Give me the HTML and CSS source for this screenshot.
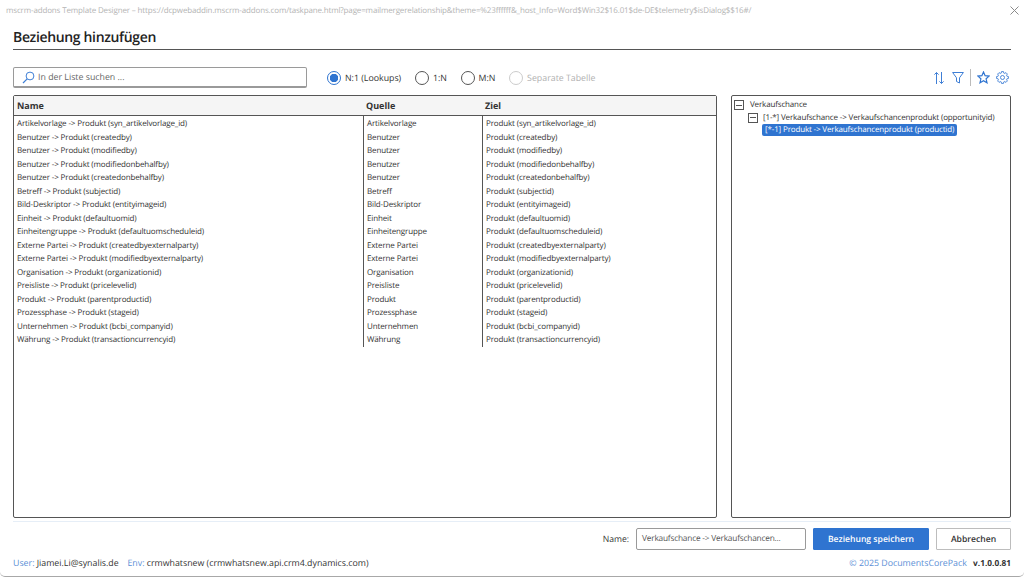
FILE: index.html
```html
<!DOCTYPE html>
<html lang="de">
<head>
<meta charset="utf-8">
<title>Beziehung hinzufügen</title>
<link rel="stylesheet" href="styles.css">
</head>
<body>
<div class="window">
  <div class="titlebar">
    <span class="titlebar-text">mscrm-addons Template Designer – https://dcpwebaddin.mscrm-addons.com/taskpane.html?page=mailmergerelationship&amp;theme=%23ffffff&amp;_host_Info=Word$Win32$16.01$de-DE$telemetry$isDialog$$16#/</span>
    <svg class="close" width="9" height="9" viewBox="0 0 9 9"><path d="M.5.5l8 8M8.500.5l-8 8" stroke="#8a8a8a" stroke-width="1" fill="none"/></svg>
  </div>
  <h1 class="heading">Beziehung hinzufügen</h1>
  <div class="toolbar">
    <div class="search">
      <svg class="search-icon" width="13" height="13" viewBox="0 0 13 13"><circle cx="8" cy="5" r="3.900" fill="none" stroke="#3f7fd6" stroke-width="1"/><path d="M5.200 7.800L1 12" stroke="#3f7fd6" stroke-width="1.200" fill="none"/></svg>
      <span>In der Liste suchen ...</span>
    </div>
    <div class="radios">
      <span class="radio"><i class="dot on"></i>N:1 (Lookups)</span>
      <span class="radio"><i class="dot"></i>1:N</span>
      <span class="radio"><i class="dot"></i>M:N</span>
      <span class="radio disabled"><i class="dot"></i>Separate Tabelle</span>
    </div>
    <div class="tools">
      <svg class="tool-sort" width="10" height="14" viewBox="0 0 10 14"><path d="M2.500 13V1.500M.4 3.600l2.100-2.100 2.100 2.100" stroke="#3f7fd6" fill="none"/><path d="M7.500 1v11.500M5.400 10.400l2.100 2.100 2.100-2.100" stroke="#3f7fd6" fill="none"/></svg>
      <svg width="12" height="13" viewBox="0 0 12 13"><path d="M.6 1.500h10.800L7.500 6.800V12L4.500 10.500V6.800z" stroke="#3f7fd6" fill="none"/></svg>
      <i class="tool-sep"></i>
      <svg width="13" height="13" viewBox="0 0 13 13"><path d="M6.500 1l1.600 3.700 4 .4-3 2.700.9 4-3.500-2.100L3 11.800l.9-4-3-2.700 4-.4z" stroke="#2f74d0" stroke-width="1.200" fill="none"/></svg>
      <svg class="tool-gear" width="13" height="13" viewBox="-6.500 -6.500 13 13"><circle r="2" stroke="#3f7fd6" stroke-width=".9" fill="none"/><path d="M-1.300-4.400L-1-5.900H1L1.300-4.400 2.190-4.030 3.460-4.880 4.880-3.460 4.030-2.190 4.400-1.300 5.900-1V1L4.400 1.300 4.030 2.190 4.880 3.460 3.460 4.880 2.190 4.030 1.300 4.400 1 5.900H-1L-1.300 4.400-2.190 4.030-3.460 4.880-4.880 3.460-4.030 2.190-4.400 1.300-5.900 1V-1L-4.400-1.300-4.030-2.190-4.880-3.460-3.460-4.880-2.190-4.030z" stroke="#3f7fd6" stroke-width=".9" stroke-linejoin="round" fill="none"/></svg>
    </div>
  </div>
  <div class="panes">
    <div class="pane list">
      <div class="cols head"><div>Name</div><div>Quelle</div><div>Ziel</div></div>
      <div class="cols body">
        <div class="col">
          <div>Artikelvorlage -&gt; Produkt (syn_artikelvorlage_id)</div>
          <div>Benutzer -&gt; Produkt (createdby)</div>
          <div>Benutzer -&gt; Produkt (modifiedby)</div>
          <div>Benutzer -&gt; Produkt (modifiedonbehalfby)</div>
          <div>Benutzer -&gt; Produkt (createdonbehalfby)</div>
          <div>Betreff -&gt; Produkt (subjectid)</div>
          <div>Bild-Deskriptor -&gt; Produkt (entityimageid)</div>
          <div>Einheit -&gt; Produkt (defaultuomid)</div>
          <div>Einheitengruppe -&gt; Produkt (defaultuomscheduleid)</div>
          <div>Externe Partei -&gt; Produkt (createdbyexternalparty)</div>
          <div>Externe Partei -&gt; Produkt (modifiedbyexternalparty)</div>
          <div>Organisation -&gt; Produkt (organizationid)</div>
          <div>Preisliste -&gt; Produkt (pricelevelid)</div>
          <div>Produkt -&gt; Produkt (parentproductid)</div>
          <div>Prozessphase -&gt; Produkt (stageid)</div>
          <div>Unternehmen -&gt; Produkt (bcbi_companyid)</div>
          <div>Währung -&gt; Produkt (transactioncurrencyid)</div>
        </div>
        <div class="col">
          <div>Artikelvorlage</div>
          <div>Benutzer</div>
          <div>Benutzer</div>
          <div>Benutzer</div>
          <div>Benutzer</div>
          <div>Betreff</div>
          <div>Bild-Deskriptor</div>
          <div>Einheit</div>
          <div>Einheitengruppe</div>
          <div>Externe Partei</div>
          <div>Externe Partei</div>
          <div>Organisation</div>
          <div>Preisliste</div>
          <div>Produkt</div>
          <div>Prozessphase</div>
          <div>Unternehmen</div>
          <div>Währung</div>
        </div>
        <div class="col">
          <div>Produkt (syn_artikelvorlage_id)</div>
          <div>Produkt (createdby)</div>
          <div>Produkt (modifiedby)</div>
          <div>Produkt (modifiedonbehalfby)</div>
          <div>Produkt (createdonbehalfby)</div>
          <div>Produkt (subjectid)</div>
          <div>Produkt (entityimageid)</div>
          <div>Produkt (defaultuomid)</div>
          <div>Produkt (defaultuomscheduleid)</div>
          <div>Produkt (createdbyexternalparty)</div>
          <div>Produkt (modifiedbyexternalparty)</div>
          <div>Produkt (organizationid)</div>
          <div>Produkt (pricelevelid)</div>
          <div>Produkt (parentproductid)</div>
          <div>Produkt (stageid)</div>
          <div>Produkt (bcbi_companyid)</div>
          <div>Produkt (transactioncurrencyid)</div>
        </div>
      </div>
    </div>
    <div class="pane tree">
      <div class="node"><i class="toggle"></i><span>Verkaufschance</span></div>
      <div class="node level1"><i class="toggle"></i><span>[1-*] Verkaufschance -&gt; Verkaufschancenprodukt (opportunityid)</span></div>
      <div class="node level2"><span class="selected">[*-1] Produkt -&gt; Verkaufschancenprodukt (productid)</span></div>
    </div>
  </div>
  <div class="actions">
    <label class="name-label">Name:</label>
    <div class="name-input">Verkaufschance -&gt; Verkaufschancen...</div>
    <button class="btn primary">Beziehung speichern</button>
    <button class="btn">Abbrechen</button>
  </div>
  <div class="status">
    <div><span class="key">User:</span> Jiamei.Li@synalis.de <span class="key env">Env:</span> crmwhatsnew (crmwhatsnew.api.crm4.dynamics.com)</div>
    <div><span class="key copy">© 2025 DocumentsCorePack</span> <b class="version">v.1.0.0.81</b></div>
  </div>
</div>
</body>
</html>
```
FILE: styles.css
```css
* { box-sizing: border-box; }
html, body { margin: 0; height: 100%; background: #fff; overflow: hidden; }
body { font-family: "Open Sans", "Noto Sans", sans-serif; color: #333; text-rendering: geometricPrecision; }
.window {
  width: 1024px; height: 577px; display: flex; flex-direction: column;
  padding: 0 13px; border-bottom: 1px solid #a8a8a8; border-radius: 0 0 5px 5px;
}
.titlebar { display: flex; justify-content: space-between; align-items: center; height: 20px; margin: 0 -8px 0 -7px; }
.titlebar-text { font-size: 8px; color: #b4b4b4; white-space: nowrap; letter-spacing: -.15px; }
.close { flex: none; }
.heading {
  margin: 6px 0 0; height: 24px; font-size: 14px; line-height: 23px; font-weight: 600; color: #222;
  border-bottom: 1px solid #555; letter-spacing: -.35px;
}
.toolbar { display: flex; align-items: center; height: 21px; margin-top: 17px; }
.search {
  width: 294px; height: 21px; display: flex; align-items: center; gap: 3px; padding-left: 8px;
  border: 1px solid #9a9a9a; border-bottom-width: 2px; border-radius: 2px; font-size: 8.800px; color: #666;
}
.radios { display: flex; align-items: center; gap: 13.700px; margin-left: 20px; }
.radio { display: flex; align-items: center; gap: 4px; font-size: 8.800px; color: #333; }
.radio.disabled { color: #b0b0b0; }
.dot { width: 14px; height: 14px; border: 1px solid #555; border-radius: 50%; display: block; }
.radio.disabled .dot { border-color: #ccc; }
.dot.on { border-color: #2f74d0; background: radial-gradient(circle, #2f74d0 0 4px, #fff 4.500px); }
.tools { margin-left: auto; display: flex; align-items: center; gap: 6px; padding-right: 2px; }
.tool-sort { margin-right: 2px; }
.tool-sep { width: 1px; height: 17px; background: #bbb; }
.panes { display: flex; gap: 14px; margin-top: 7px; height: 423px; }
.pane { border: 1px solid #555; border-radius: 2px; }
.list { width: 704px; display: flex; flex-direction: column; }
.tree { flex: 1; padding: 3px 2px; font-size: 8px; line-height: 12px; letter-spacing: -.15px; }
.cols { display: grid; grid-template-columns: 349px 119px 1fr; }
.head { height: 20px; background: #f5f5f5; border-bottom: 1px solid #555; font-size: 9px; font-weight: 700; line-height: 19px; color: #333; }
.head > div { padding-left: 3px; }
.col { border-left: 1px solid #555; padding: 1px 0 0 3px; }
.col:first-child { border-left: 0; }
.body { font-size: 8px; width: 100%; letter-spacing: -.13px; }
.col > div { height: 13.500px; line-height: 13.500px; white-space: nowrap; }
.node { display: flex; align-items: center; height: 12.500px; white-space: nowrap; }
.toggle { width: 10px; height: 10px; border: 1px solid #555; display: block; position: relative; margin-right: 6px; flex: none; }
.toggle::after { content: ""; position: absolute; left: 1px; right: 1px; top: 3.500px; height: 1px; background: #555; }
.level1 { margin-left: 14px; }
.level1 .toggle { margin-right: 5px; }
.level2 { margin-left: 28px; }
.selected { background: #2f74d0; color: #fff; padding: 0 3px; border-radius: 2px; line-height: 12px; }
.actions {
  display: flex; align-items: center; justify-content: flex-end; height: 29px; margin-top: 3px;
  border-top: 1px solid #e6eef7; padding-top: 6px;
}
.name-label { font-size: 8.600px; margin-right: 7px; }
.name-input {
  width: 170px; height: 22px; border: 1px solid #9a9a9a; border-radius: 2px; font-size: 8.300px; letter-spacing: -.2px;
  line-height: 20px; padding-left: 5px; color: #555; white-space: nowrap; margin-right: 7px;
}
.btn {
  font: 600 8.600px "Open Sans", sans-serif; text-rendering: geometricPrecision; height: 22px; width: 75px; border: 1px solid #bdbdbd; border-radius: 1px;
  background: #fff; color: #333; padding: 0;
}
.btn.primary { width: 116px; background: #2f74d0; border-color: #2f74d0; color: #fff; margin-right: 7px; }
.status { display: flex; justify-content: space-between; align-items: center; margin-top: 6px; font-size: 8.800px; color: #333; height: 14px; }
.key { color: #5b8fd6; }
.env { margin-left: 6.500px; }
.version { font-weight: 700; margin-left: 4px; font-size: 8.300px; }
```
